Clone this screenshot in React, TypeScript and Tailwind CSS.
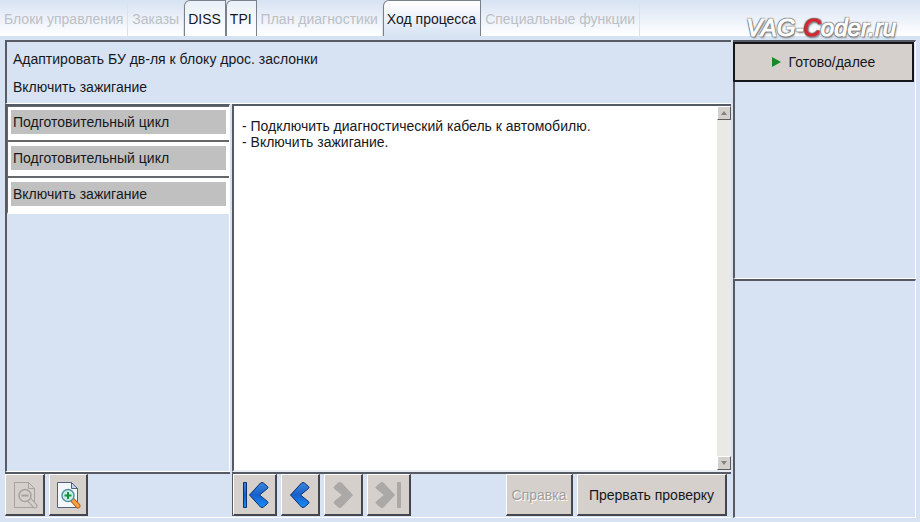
import { useState } from "react";
import clsx from "clsx";

const tabs = [
  { label: "Блоки управления", enabled: false },
  { label: "Заказы", enabled: false },
  { label: "DISS", enabled: true },
  { label: "TPI", enabled: true },
  { label: "План диагностики", enabled: false },
  { label: "Ход процесса", enabled: true },
  { label: "Специальные функции", enabled: false },
];

const steps = ["Подготовительный цикл", "Подготовительный цикл", "Включить зажигание"];

const panel = "border-t-2 border-l-2 border-t-[#555a64] border-l-[#555a64] border-r border-b border-r-white border-b-white";
const raised =
  "flex items-center justify-center bg-[#d5d0cb] border-l border-t border-l-white border-t-white border-r-2 border-b-2 border-r-[#44464b] border-b-[#44464b]";

function PageZoomIcon({ disabled = false }: { disabled?: boolean }) {
  const line = disabled ? "#a5a29d" : "#53627c";
  return (
    <svg width="26" height="28" viewBox="0 0 26 28" fill="none">
      <path d="M2.5 1.5h14l6 6v19h-20z" fill={disabled ? "none" : "#f4f8fd"} stroke={line} />
      <path d="M16.5 1.5v6h6z" fill={disabled ? "none" : "#c5d6ee"} stroke={line} />
      <path d="M18 19.500l5 5.500" stroke={disabled ? "#a5a29d" : "#b5651d"} strokeWidth="5" strokeLinecap="round" />
      <path d="M18 19.500l5 5.500" stroke={disabled ? "#d5d0cb" : "#ffa143"} strokeWidth="3" strokeLinecap="round" />
      <circle cx="13" cy="14.500" r="6" fill={disabled ? "#d5d0cb" : "#c9f0e4"} stroke={disabled ? "#a5a29d" : "#5a8fa5"} strokeWidth="1.500" />
      <path d={disabled ? "M9.500 14.500h7" : "M9.500 14.500h7M13 11v7"} stroke={disabled ? "#a5a29d" : "#159045"} strokeWidth="2" />
    </svg>
  );
}

function ArrowIcon({ forward = false, bar = false }: { forward?: boolean; bar?: boolean }) {
  const fill = forward ? "#aaa9a7" : "url(#arrow-blue)";
  const stroke = forward ? "#aaa9a7" : "#0d2f6e";
  return (
    <svg width="28" height="28" viewBox="0 0 28 28">
      <defs>
        <linearGradient id="arrow-blue" x1="0" y1="0" x2="0" y2="1">
          <stop offset="0" stopColor="#3c86dc" />
          <stop offset="0.500" stopColor="#1660cc" />
          <stop offset="1" stopColor="#1690fa" />
        </linearGradient>
      </defs>
      <g transform={forward ? "translate(28 0) scale(-1 1)" : undefined} fill={fill} stroke={stroke} strokeLinejoin="round">
        {bar && <rect x="2.500" y="1.500" width="3" height="25" />}
        <path
          d="M8.500 14L19.500 2q1.500-1 3 0l4 3.500q1 1 0 2L18.500 14l8 6.500q1 1 0 2l-4 3.500q-1.500 1-3 0z"
          transform={bar ? undefined : "translate(-4 0)"}
        />
      </g>
    </svg>
  );
}

function ScrollArrow({ down = false }: { down?: boolean }) {
  return (
    <button
      type="button"
      aria-label={down ? "Прокрутить вниз" : "Прокрутить вверх"}
      className="flex h-3.5 w-3.5 items-center justify-center border border-t-white border-l-white border-r-[#5c5c5c] border-b-[#5c5c5c] bg-[#d5d0cb]"
    >
      <svg width="6" height="4" viewBox="0 0 6 4" fill="#85827d">
        <path d={down ? "M0 0h6L3 4z" : "M0 4h6L3 0z"} />
      </svg>
    </button>
  );
}

export default function App() {
  const [active, setActive] = useState("Ход процесса");

  return (
    <div className="flex h-screen flex-col bg-[#d7e3f3] font-['Liberation_Sans',Arial,sans-serif] text-sm text-[#15181d]">
      <nav className="relative flex h-9 shrink-0 bg-linear-to-b from-[#d7e3f3] to-white">
        {tabs.map((tab) => (
          <button
            key={tab.label}
            type="button"
            disabled={!tab.enabled}
            onClick={() => setActive(tab.label)}
            className={clsx(
              "whitespace-nowrap",
              tab.enabled
                ? "rounded-tl-md border-t border-l border-r border-[#7b818b] pr-1 pl-[3px]"
                : "border-r border-[#dce3ec] pt-px pr-1 pl-1 text-[#bcc0c6]",
              tab.enabled && (active === tab.label ? "bg-linear-to-b from-white to-[#d7e3f3]" : "bg-linear-to-b from-[#e9f0f8] to-white")
            )}
          >
            {tab.label}
          </button>
        ))}
        <div className="pointer-events-none absolute top-3 right-6 text-2xl italic text-white [-webkit-text-stroke:1px_white] [text-shadow:1px_1px_1px_#777,-1px_-1px_1px_#777,1px_-1px_1px_#777,-1px_1px_1px_#777,1px_2px_2px_#777]">
          VAG-<span className="text-[#dc2430] [-webkit-text-stroke:1px_#dc2430]">C</span>oder.ru
        </div>
      </nav>

      <main className="flex min-h-0 flex-1 gap-0.5 pt-1 pr-1 pb-1 pl-[5px]">
        <div className="flex min-w-0 flex-1 flex-col">
          <header className={clsx(panel, "h-16 shrink-0 border-r-0 px-1.5 pt-[7px]")}>
            <h1 className="leading-5">Адаптировать БУ дв-ля к блоку дрос. заслонки</h1>
            <h2 className="mt-2 leading-5">Включить зажигание</h2>
          </header>

          <div className="flex min-h-0 flex-1 gap-0.5">
            <ul className={clsx(panel, "w-[225px] shrink-0")}>
              {steps.map((step, i) => (
                <li
                  key={i}
                  className="h-9 border-b-2 border-l border-b-[#65676b] border-l-[#65676b] bg-white px-[3px] pt-1 first:border-t first:border-t-[#65676b] first:pt-[3px] last:border-b-white"
                >
                  <div className="h-6 bg-[#c0c0c0] px-0.5 leading-6">{step}</div>
                </li>
              ))}
            </ul>
            <section className="flex min-w-0 flex-1 border-t-2 border-b-2 border-l-2 border-t-[#555a64] border-b-[#e9edf2] border-l-[#555a64] bg-white">
              <div className="flex-1 px-2 pt-3 leading-4">
                <p>- Подключить диагностический кабель к автомобилю.</p>
                <p>- Включить зажигание.</p>
              </div>
              <div className="flex w-3.5 flex-col justify-between bg-[#ebe9e6]">
                <ScrollArrow />
                <ScrollArrow down />
              </div>
            </section>
          </div>

          <footer className="flex h-[46px] shrink-0 gap-0.5 border-b border-white pb-px">
            <div className="flex w-[225px] gap-1 border-t-2 border-[#555a64]">
              <button type="button" disabled aria-label="Уменьшить" className={clsx(raised, "w-10")}>
                <PageZoomIcon disabled />
              </button>
              <button type="button" aria-label="Увеличить" className={clsx(raised, "w-[39px]")}>
                <PageZoomIcon />
              </button>
            </div>
            <div className="flex flex-1 gap-1 border-t-2 border-l border-[#555a64] pr-1">
              <button type="button" aria-label="В начало" className={clsx(raised, "w-11")}>
                <ArrowIcon bar />
              </button>
              <button type="button" aria-label="Назад" className={clsx(raised, "w-[39px]")}>
                <ArrowIcon />
              </button>
              <button type="button" disabled aria-label="Вперёд" className={clsx(raised, "w-[39px]")}>
                <ArrowIcon forward />
              </button>
              <button type="button" disabled aria-label="В конец" className={clsx(raised, "w-11")}>
                <ArrowIcon forward bar />
              </button>
              <button type="button" disabled className={clsx(raised, "ml-auto w-[67px] text-[#a09d99] [text-shadow:1px_1px_0_white]")}>
                Справка
              </button>
              <button type="button" className={clsx(raised, "w-[150px]")}>
                Прервать проверку
              </button>
            </div>
          </footer>
        </div>

        <aside className="flex w-[183px] shrink-0 flex-col">
          <div className={clsx(panel, "flex-1 border-t-0")}>
            <button
              type="button"
              className="-ml-0.5 flex h-10 w-[181px] items-center justify-center gap-2 border-2 border-[#14161a] bg-[#d5d0cb]"
            >
              <svg width="9" height="10" viewBox="0 0 9 10" fill="#168a28">
                <path d="M0 0l9 5-9 5z" />
              </svg>
              Готово/далее
            </button>
          </div>
          <div className={clsx(panel, "flex-1")} />
        </aside>
      </main>
    </div>
  );
}
